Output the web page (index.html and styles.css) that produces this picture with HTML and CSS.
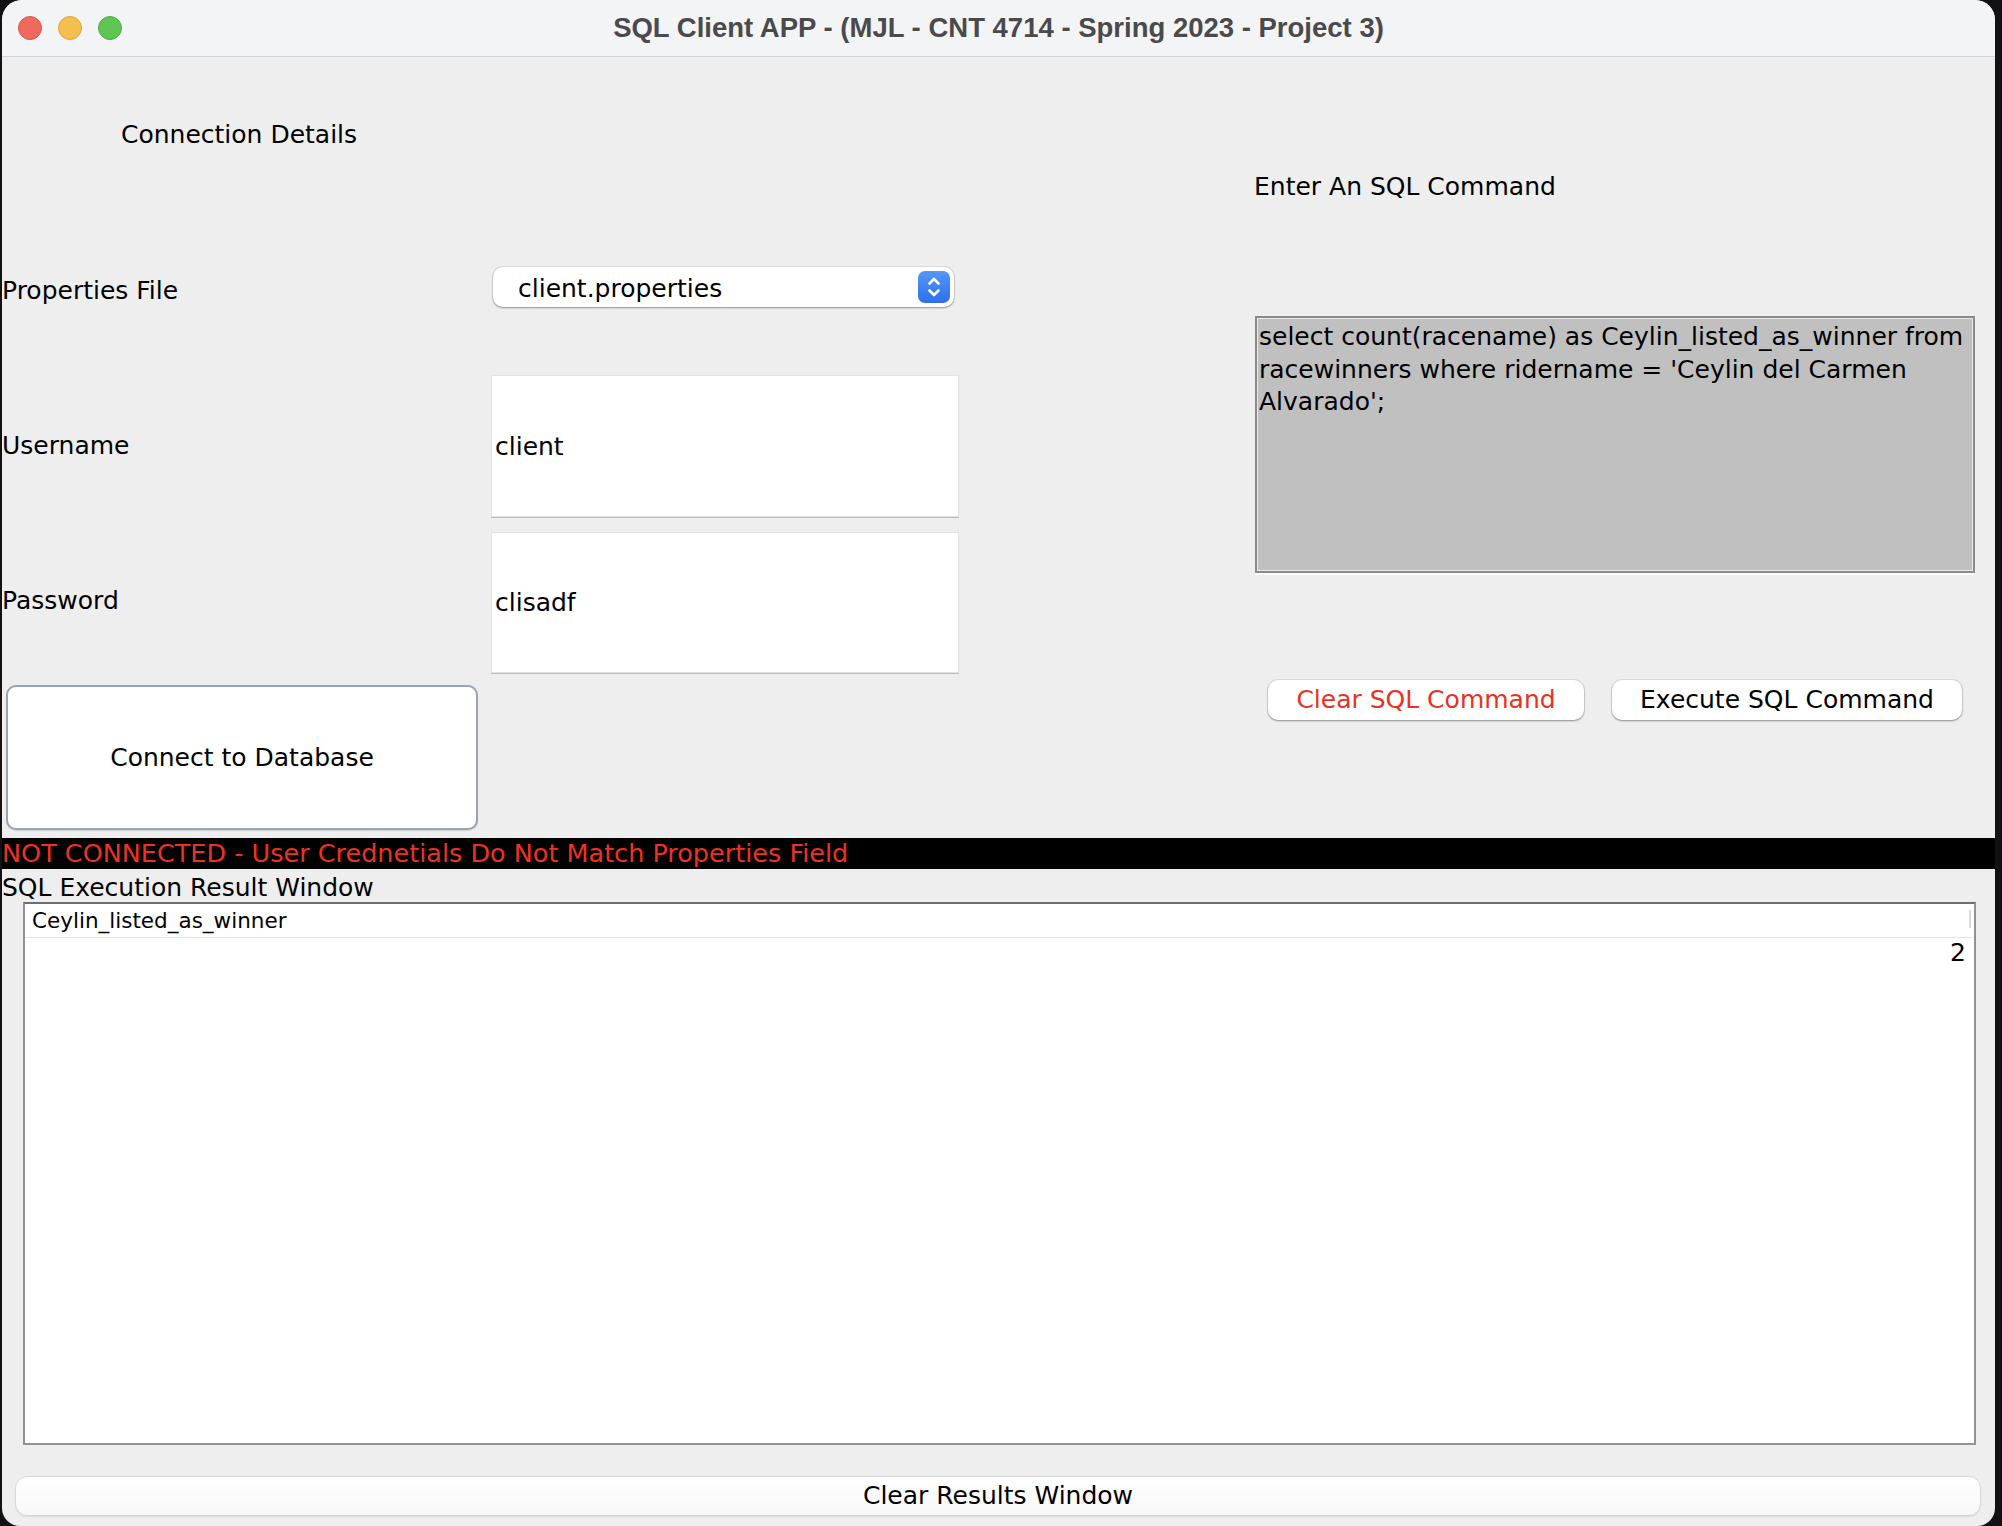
FILE: index.html
```html
<!DOCTYPE html>
<html lang="en">
<head>
<meta charset="utf-8">
<title>SQL Client APP</title>
<link rel="stylesheet" href="styles.css">
</head>
<body>
<div class="window">
  <div class="titlebar">
    <div class="lights">
      <span class="light red"></span>
      <span class="light yellow"></span>
      <span class="light green"></span>
    </div>
    <div class="title">SQL Client APP - (MJL - CNT 4714 - Spring 2023 - Project 3)</div>
    <div class="lights-spacer"></div>
  </div>

  <div class="top">
    <div class="conn-grid">
      <div class="cell heading">Connection Details</div>
      <div class="cell"></div>

      <div class="cell label">Properties File</div>
      <div class="cell">
        <div class="combo">
          <span class="combo-text">client.properties</span>
          <span class="stepper">
            <svg width="32" height="32" viewBox="0 0 32 32"><path d="M11.5 12.5 L16 8 L20.5 12.5 M11.5 19.5 L16 24 L20.5 19.5" fill="none" stroke="#fff" stroke-width="2.6" stroke-linecap="round" stroke-linejoin="round"/></svg>
          </span>
        </div>
      </div>

      <div class="cell label">Username</div>
      <div class="cell"><div class="field field-user">client</div></div>

      <div class="cell label">Password</div>
      <div class="cell"><div class="field field-pass">clisadf</div></div>

      <div class="cell"><button class="connect">Connect to Database</button></div>
      <div class="cell"></div>
    </div>

    <div class="sql-panel">
      <div class="sql-heading">Enter An SQL Command</div>
      <div class="sql-text">select count(racename) as Ceylin_listed_as_winner from<br>racewinners where ridername = 'Ceylin del Carmen<br>Alvarado';</div>
      <div class="sql-buttons">
        <button class="btn btn-clear">Clear SQL Command</button>
        <button class="btn btn-exec">Execute SQL Command</button>
      </div>
    </div>
  </div>

  <div class="status">NOT CONNECTED - User Crednetials Do Not Match Properties Field</div>
  <div class="result-label">SQL Execution Result Window</div>

  <div class="result-table">
    <div class="thead">
      <span class="th">Ceylin_listed_as_winner</span>
      <span class="th-corner"></span>
    </div>
    <div class="tr"><span class="td">2</span></div>
  </div>

  <div class="bottom-bar">
    <button class="clear-results">Clear Results Window</button>
  </div>
</div>
</body>
</html>
```

FILE: styles.css
```css
html, body {
  margin: 0;
  padding: 0;
}

body {
  width: 2002px;
  height: 1526px;
  overflow: hidden;
  background: #121214;
  font-family: "DejaVu Sans", "Liberation Sans", sans-serif;
  font-size: 25px;
  color: #000;
}

.window {
  margin-left: 2px;
  width: 1993px;
  height: 1526px;
  background: #eeeeee;
  border-radius: 20px 20px 18px 18px;
  overflow: hidden;
  display: flex;
  flex-direction: column;
}

/* title bar */
.titlebar {
  height: 56px;
  flex: none;
  background: #f3f4f6;
  border-bottom: 1px solid #d3d3d3;
  display: flex;
  align-items: center;
}

.lights {
  width: 124px;
  flex: none;
  display: flex;
  gap: 16px;
  padding-left: 16px;
  box-sizing: border-box;
}

.lights-spacer {
  width: 124px;
  flex: none;
}

.light {
  width: 24px;
  height: 24px;
  border-radius: 50%;
  box-sizing: border-box;
}

.red { background: #ee6a5e; border: 1px solid #d8574c; }
.yellow { background: #f5bf4f; border: 1px solid #dca43b; }
.green { background: #61c554; border: 1px solid #4dad42; }

.title {
  flex: 1;
  text-align: center;
  font-family: "Liberation Sans", Arial, sans-serif;
  font-weight: bold;
  font-size: 27.5px;
  color: #4a4a4c;
  margin-top: -1px;
  white-space: nowrap;
}

/* top section */
.top {
  height: 781px;
  flex: none;
  display: flex;
}

.conn-grid {
  display: grid;
  grid-template-columns: 489px 468px;
  grid-template-rows: repeat(5, 155px);
  flex: none;
}

.cell {
  display: flex;
  align-items: center;
  min-width: 0;
}

.heading {
  padding-left: 119px;
}

.label {
  padding-top: 2px;
}

.combo {
  margin-left: 2px;
  margin-bottom: 5px;
  width: 461px;
  height: 40px;
  box-sizing: border-box;
  background: #fff;
  border-radius: 10px;
  box-shadow: 0 0 0 1px rgba(0, 0, 0, 0.07), 0 1px 2px rgba(0, 0, 0, 0.35);
  display: flex;
  align-items: center;
  padding-left: 25px;
  padding-right: 4px;
}

.combo-text {
  flex: 1;
  line-height: 30px;
  padding-top: 4px;
}

.stepper {
  width: 32px;
  height: 32px;
  border-radius: 7px;
  background: linear-gradient(#5498fa, #2d6fe9);
  display: flex;
  align-items: center;
  justify-content: center;
}

.stepper svg {
  display: block;
}

.field {
  width: 468px;
  box-sizing: border-box;
  background: #fff;
  border: 1px solid #e2e2e2;
  box-shadow: 0 1px 0 #bcbcbc;
  display: flex;
  align-items: center;
  padding-left: 3px;
  padding-top: 0;
}

.field-user {
  height: 142px;
  margin-top: 3px;
}

.field-pass {
  height: 141px;
  margin-top: 5px;
}

.connect {
  margin: 6px 0 0 4px;
  width: 472px;
  height: 145px;
  box-sizing: border-box;
  background: #fff;
  border: 2px solid #9aa3b1;
  border-radius: 10px;
  box-shadow: 0 1px 1px rgba(0, 0, 0, 0.12);
  font-family: inherit;
  font-size: 25px;
  color: #000;
  padding: 0;
}

/* SQL panel */
.sql-panel {
  margin-left: 295px;
  width: 722px;
  flex: none;
  display: flex;
  flex-direction: column;
}

.sql-heading {
  margin-top: 115px;
  line-height: 30px;
}

.sql-text {
  margin-top: 114px;
  margin-left: 1px;
  width: 720px;
  height: 257px;
  box-sizing: border-box;
  background: #c0c0c0;
  border: 2px solid #8a8a8a;
  box-shadow: inset 0 0 0 1px #e9e9e9, 0 2px 0 #fafafa;
  padding: 3px 0 0 2px;
  line-height: 32.5px;
  white-space: nowrap;
  overflow: hidden;
}

.sql-buttons {
  margin-top: 107px;
  display: flex;
  gap: 28px;
  padding-left: 14px;
}

.btn {
  height: 40px;
  box-sizing: border-box;
  background: #fff;
  border: none;
  border-radius: 10px;
  box-shadow: 0 0 0 1px rgba(0, 0, 0, 0.08), 0 1px 2px rgba(0, 0, 0, 0.35);
  font-family: inherit;
  font-size: 25px;
  padding: 0 0 2px 0;
}

.btn-clear {
  width: 316px;
  color: #e8321f;
}

.btn-exec {
  width: 350px;
  color: #000;
}

/* status */
.status {
  height: 31px;
  flex: none;
  background: #000;
  color: #ec3322;
  font-size: 25.5px;
  line-height: 31px;
  white-space: nowrap;
}

.result-label {
  height: 33px;
  flex: none;
  line-height: 33px;
  padding-top: 2px;
  box-sizing: border-box;
  white-space: nowrap;
}

/* table */
.result-table {
  margin-left: 21px;
  width: 1953px;
  height: 543px;
  flex: none;
  box-sizing: border-box;
  background: #fff;
  border: 2px solid #929292;
  border-top-color: #6e6e6e;
}

.thead {
  height: 33px;
  border-bottom: 1px solid #e3e3e3;
  display: flex;
  align-items: center;
}

.th {
  flex: 1;
  font-size: 21.5px;
  padding-left: 7px;
  line-height: 33px;
}

.th-corner {
  width: 2px;
  height: 18px;
  background: #dcdcdc;
  margin-right: 3px;
  margin-top: -4px;
}

.tr {
  height: 30px;
  display: flex;
  justify-content: flex-end;
  align-items: center;
  padding-right: 8px;
}

.td {
  line-height: 30px;
}

/* bottom */
.bottom-bar {
  flex: none;
  padding-top: 31px;
  padding-left: 13px;
}

.clear-results {
  width: 1966px;
  height: 40px;
  box-sizing: border-box;
  background: linear-gradient(#ffffff, #f8f8f8);
  border: 1px solid #d6d6d6;
  border-radius: 12px;
  box-shadow: 0 1px 1px rgba(0, 0, 0, 0.08);
  font-family: inherit;
  font-size: 25px;
  color: #000;
  padding: 0 0 2px 0;
}
```
